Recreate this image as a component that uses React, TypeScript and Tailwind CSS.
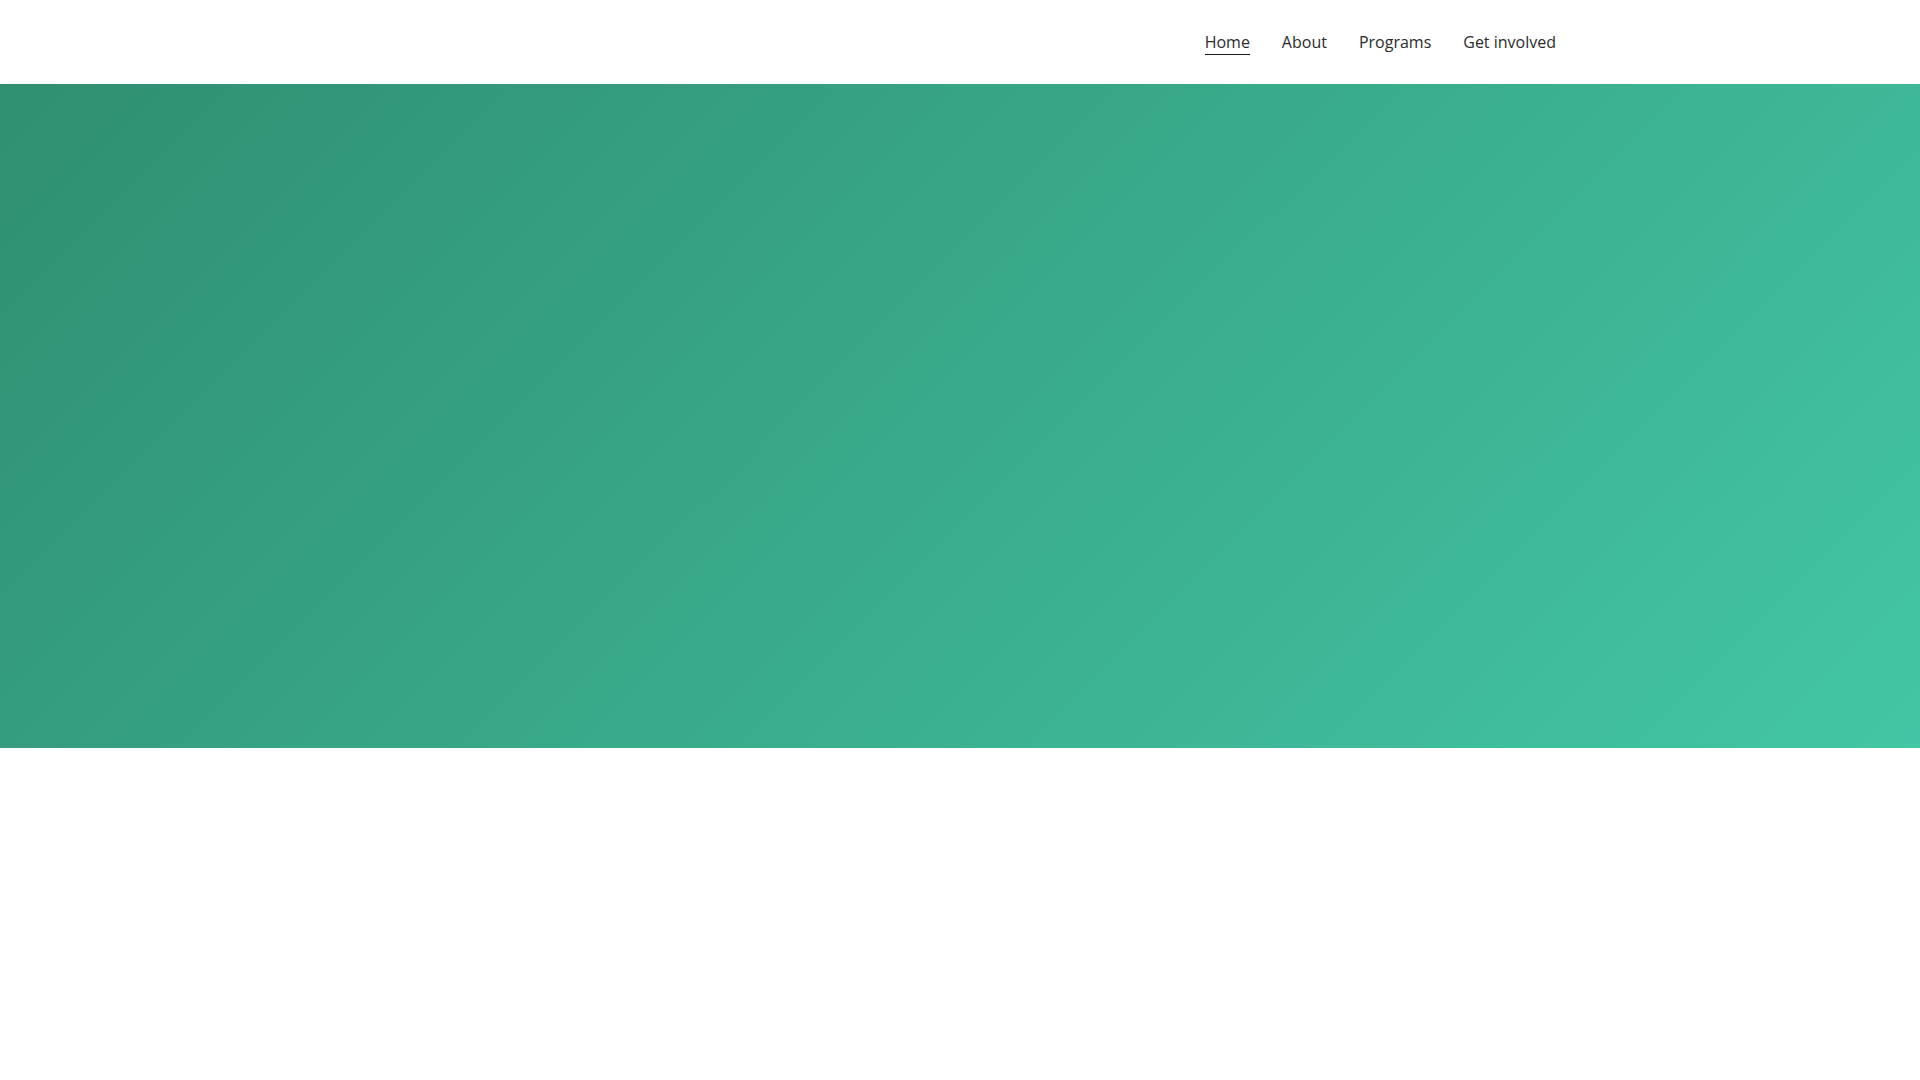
export default function App() {
  const items = ["Home", "About", "Programs", "Get involved"];
  return (
    <div className="min-h-screen bg-white" style={{ fontFamily: '"Open Sans", sans-serif' }}>
      <header className="h-[84px] bg-white">
        <div className="mx-auto flex h-full max-w-7xl items-center justify-end px-11">
          <nav className="flex items-center gap-8 text-base text-[#2b2b2b]">
            {items.map((it, i) => (
              <a
                key={it}
                href="#"
                className={i === 0 ? "border-b border-[#1a1a1a] leading-6" : "border-b border-transparent leading-6"}
              >
                {it}
              </a>
            ))}
          </nav>
        </div>
      </header>
      <section className="h-[664px] bg-[linear-gradient(135deg,#2f8f71_0%,#43c6a5_100%)]" />
    </div>
  );
}
